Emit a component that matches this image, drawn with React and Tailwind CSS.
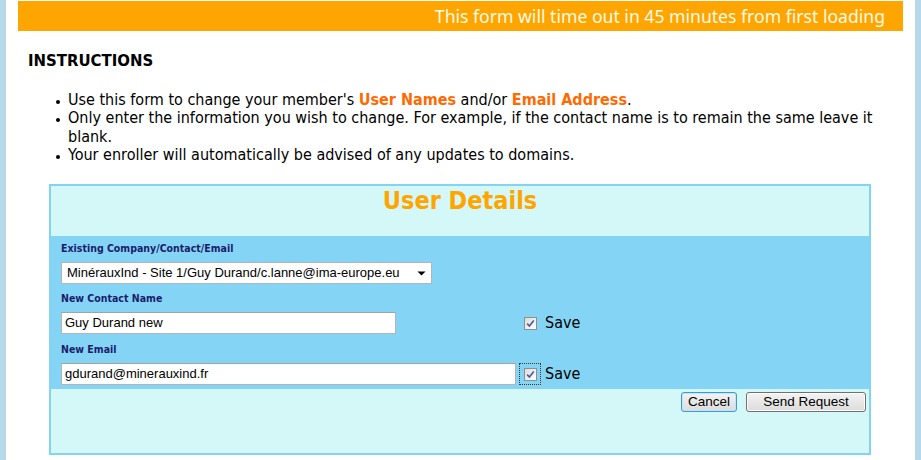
import React from "react";

const tah = "font-['DejaVu_Sans_Condensed','DejaVu_Sans',sans-serif]";
const arial = "font-['Liberation_Sans',Arial,sans-serif]";

function Check({ focused }) {
  const box = (
    <span className="flex h-[13px] w-[13px] items-center justify-center border border-[#8e8f8f] bg-gradient-to-br from-[#dcdcdc] to-[#ffffff]">
      <svg width="9" height="9" viewBox="0 0 9 9">
        <path d="M1.2 4.6 L3.4 7 L7.8 1.4" fill="none" stroke="#4d5b98" strokeWidth="1.6" />
      </svg>
    </span>
  );
  if (focused) {
    return (
      <span className="flex h-[22px] w-[22px] items-center justify-center border border-dotted border-[#4a3320]">
        {box}
      </span>
    );
  }
  return <span className="ml-[5px] flex h-[22px] w-[13px] items-center">{box}</span>;
}

function Bullet({ children }) {
  return (
    <li className="flex">
      <span className="flex w-[13px] shrink-0 pt-[9px]">
        <span className="ml-[1px] h-[4px] w-[4px] rounded-full bg-black"></span>
      </span>
      <span>{children}</span>
    </li>
  );
}

export default function App() {
  return (
    <div className="flex h-[460px] w-[921px] overflow-hidden bg-[#b6d9ea]">
      <div className="ml-[6px] h-full w-[909px] bg-white">
        <div
          className={`mx-[12px] mt-[1px] flex h-[30px] items-center justify-end bg-[#ffa500] pr-[18px] text-[17.6px] text-[#fffbe6] font-['Noto_Sans',sans-serif]`}
        >
          This form will time out in 45 minutes from first loading
        </div>

        <div className={`${tah} ml-[22px] mt-[20px] text-[16.6px] font-bold leading-[19px] text-black`}>
          INSTRUCTIONS
        </div>

        <ul className={`${tah} ml-[49px] mt-[21px] w-[820px] text-[16px] leading-[18.3px] text-black`}>
          <Bullet>
            Use this form to change your member's{" "}
            <span className="font-bold text-[#ff6a00]">User Names</span> and/or{" "}
            <span className="font-bold text-[#ff6a00]">Email Address</span>.
          </Bullet>
          <Bullet>
            Only enter the information you wish to change. For example, if the contact name is to remain the same
            leave it blank.
          </Bullet>
          <Bullet>Your enroller will automatically be advised of any updates to domains.</Bullet>
        </ul>

        <div className="ml-[43px] mt-[20px] w-[822px] border-2 border-[#84d3f3]">
          <div className="h-[50px] bg-[#d4f8f8] text-center">
            <span className={`${tah} text-[25px] font-bold leading-[30px] text-[#ffa500]`}>User Details</span>
          </div>

          <div className="bg-[#84d5f5] pb-[4px] pl-[10px]">
            <div className={`${tah} pt-[6px] text-[10.5px] font-bold leading-[12px] text-[#1c1c6c]`}>
              Existing Company/Contact/Email
            </div>
            <div
              className={`${arial} mt-[8px] flex h-[22px] w-[371px] items-center justify-between border border-[#b5b5b5] bg-white pl-[5px] pr-[5px] text-[13px] text-black`}
            >
              <span>MinérauxInd - Site 1/Guy Durand/c.lanne@ima-europe.eu</span>
              <svg width="9" height="5" viewBox="0 0 9 5">
                <path d="M0.5 0.5 H8.5 L4.5 4.5 Z" fill="#000" />
              </svg>
            </div>

            <div className={`${tah} mt-[8px] text-[10.5px] font-bold leading-[12px] text-[#1c1c6c]`}>
              New Contact Name
            </div>
            <div className="mt-[8px] flex h-[22px] items-center">
              <div className="w-[458px]">
                <div
                  className={`${arial} flex h-[22px] w-[335px] items-center border border-[#b5b5b5] border-t-[#a3a3a3] bg-white pl-[3px] text-[13px] text-black`}
                >
                  Guy Durand new
                </div>
              </div>
              <Check />
              <span className={`${tah} ml-[8px] text-[16px] text-black`}>Save</span>
            </div>

            <div className={`${tah} mt-[9px] text-[10.5px] font-bold leading-[12px] text-[#1c1c6c]`}>
              New Email
            </div>
            <div className="mt-[8px] flex h-[22px] items-center">
              <div className="w-[458px]">
                <div
                  className={`${arial} flex h-[22px] w-[455px] items-center border border-[#b5b5b5] border-t-[#a3a3a3] bg-white pl-[3px] text-[13px] text-black`}
                >
                  gdurand@minerauxind.fr
                </div>
              </div>
              <Check focused />
              <span className={`${tah} ml-[4px] text-[16px] text-black`}>Save</span>
            </div>
          </div>

          <div className="flex h-[64px] items-start justify-end gap-[9px] bg-[#d4f8f8] pr-[3px] pt-[3px]">
            <button
              className={`${arial} flex h-[20px] w-[56px] items-center justify-center rounded-[3px] border border-[#3c9bd6] bg-gradient-to-b from-[#f3f3f3] to-[#dcdcdc] text-[13.5px] text-black shadow-[inset_0_0_0_1px_#bfe6f8]`}
            >
              Cancel
            </button>
            <button
              className={`${arial} flex h-[20px] w-[120px] items-center justify-center rounded-[3px] border border-[#707070] bg-gradient-to-b from-[#f3f3f3] to-[#dcdcdc] text-[13.5px] text-black shadow-[inset_0_0_0_1px_#fcfcfc]`}
            >
              Send Request
            </button>
          </div>
        </div>
      </div>
    </div>
  );
}
